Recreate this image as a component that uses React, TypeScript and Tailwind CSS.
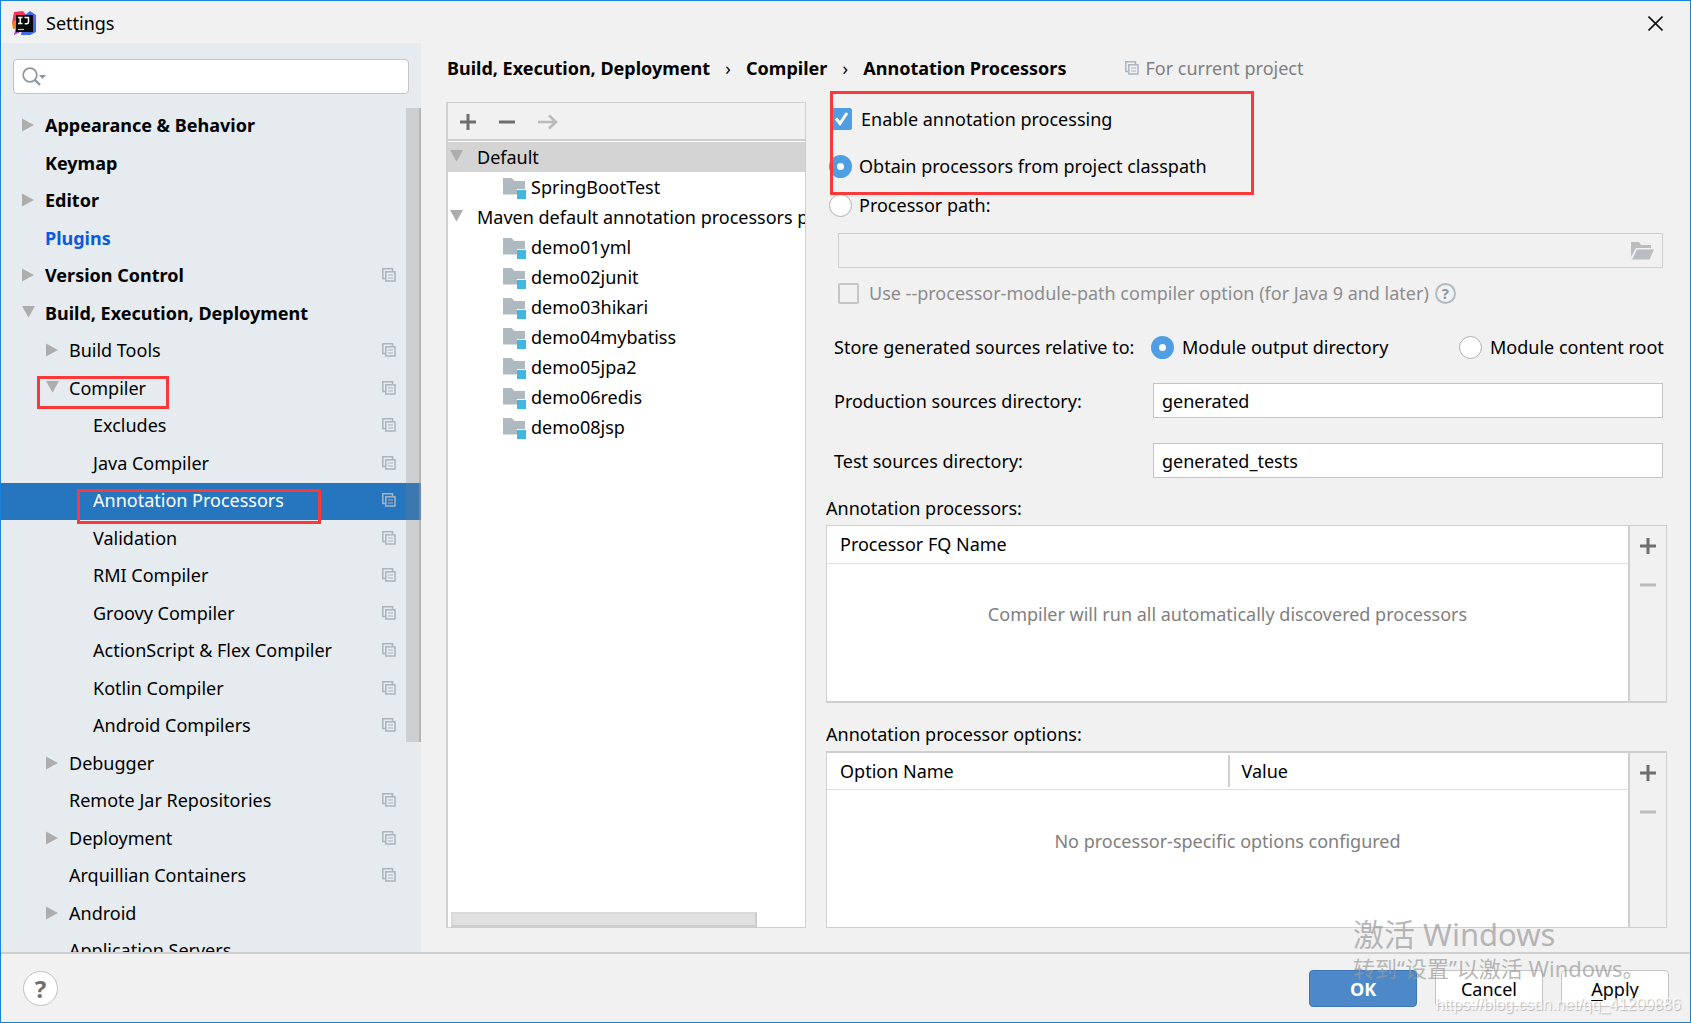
import { useState } from "react"
import type { ReactNode } from "react"

type TreeItem = { label: string; level: number; arrow?: "right" | "down"; shared?: boolean }

const tree: TreeItem[] = [
    { label: "Appearance & Behavior", level: 0, arrow: "right" },
    { label: "Keymap", level: 0 },
    { label: "Editor", level: 0, arrow: "right" },
    { label: "Plugins", level: 0 },
    { label: "Version Control", level: 0, arrow: "right", shared: true },
    { label: "Build, Execution, Deployment", level: 0, arrow: "down" },
    { label: "Build Tools", level: 1, arrow: "right", shared: true },
    { label: "Compiler", level: 1, arrow: "down", shared: true },
    { label: "Excludes", level: 2, shared: true },
    { label: "Java Compiler", level: 2, shared: true },
    { label: "Annotation Processors", level: 2, shared: true },
    { label: "Validation", level: 2, shared: true },
    { label: "RMI Compiler", level: 2, shared: true },
    { label: "Groovy Compiler", level: 2, shared: true },
    { label: "ActionScript & Flex Compiler", level: 2, shared: true },
    { label: "Kotlin Compiler", level: 2, shared: true },
    { label: "Android Compilers", level: 2, shared: true },
    { label: "Debugger", level: 1, arrow: "right" },
    { label: "Remote Jar Repositories", level: 1, shared: true },
    { label: "Deployment", level: 1, arrow: "right", shared: true },
    { label: "Arquillian Containers", level: 1, shared: true },
    { label: "Android", level: 1, arrow: "right" },
    { label: "Application Servers", level: 1 },
]

const indent = ["pl-[21px]", "pl-[45px]", "pl-[69px]"]

const modules = ["demo01yml", "demo02junit", "demo03hikari", "demo04mybatiss", "demo05jpa2", "demo06redis", "demo08jsp"]

function Arrow({ dir }: { dir?: "right" | "down" }) {
    return (
        <svg className="mr-[9px] shrink-0" width="14" height="14" viewBox="0 0 14 14" fill="#adadad">
            {dir === "right" && <path d="M0 0.5 12 7 0 13.5z" />}
            {dir === "down" && <path d="M0 0h13L6.5 11.5z" />}
        </svg>
    )
}

function SharedIcon() {
    return (
        <svg className="shrink-0" width="14" height="14" viewBox="0 0 14 14" fill="none" stroke="#a9b4bd">
            <path d="M3 10.5H0.8V0.8H10.5V3" strokeWidth="1.5" />
            <rect x="3.8" y="3.8" width="9.2" height="9.2" strokeWidth="1.5" />
            <path d="M6 7h5M6 10h5" strokeWidth="1.2" />
        </svg>
    )
}

function ModuleIcon() {
    return (
        <svg className="mt-[2px] mr-[5px] shrink-0" width="23" height="22" viewBox="0 0 23 22">
            <path d="M0 1h8.5l3 3H22v8h-8v5.500H0z" fill="#aeb9c0" />
            <rect x="14" y="13" width="9" height="9" fill="#40b6e0" />
        </svg>
    )
}

function PlusIcon() {
    return (
        <svg width="16" height="16" viewBox="0 0 16 16" stroke="#6e6e6e" strokeWidth="3">
            <path d="M8 0v16M0 8h16" />
        </svg>
    )
}

function MinusIcon({ color }: { color: string }) {
    return (
        <svg width="16" height="16" viewBox="0 0 16 16" stroke={color} strokeWidth="3">
            <path d="M0 8h16" />
        </svg>
    )
}

function Logo() {
    return (
        <svg width="25" height="25" viewBox="0 0 25 25">
            <path d="M2 1 11 0l4 5-4 9-9 1-2-3z" fill="#fe315d" />
            <path d="M0 11l5-2v8l-4 1z" fill="#f97a12" />
            <path d="M2 24l2-8 8 3z" fill="#9a3fd5" />
            <path d="M13 4l5-4 6 4v17l-6 3H9z" fill="#3f6be8" />
            <path d="M17 4l7 1v8z" fill="#6b57ff" />
            <rect x="4" y="4" width="17" height="17" fill="#0a0a0a" />
            <path d="M6 6.500h4.500M8.200 6.500v6M6 12.500h4.500M12.500 6.500h4v4.500q0 1.700-1.800 1.700h-2" stroke="#fff" strokeWidth="1.500" fill="none" />
            <path d="M6 18.500h6" stroke="#bbb" strokeWidth="1.300" />
        </svg>
    )
}

const radioClass =
    "size-[23px] shrink-0 appearance-none rounded-full border border-[#b0b0b0] bg-white checked:border-8 checked:border-[#4f9ee3]"

function Sidebar() {
    const [selected, setSelected] = useState("Annotation Processors")

    return (
        <aside className="flex w-[420px] shrink-0 flex-col overflow-hidden bg-[#e6ebef]">
            <div className="mt-4 mr-3 mb-[14px] ml-3 flex h-[35px] shrink-0 items-center rounded border border-[#c4c4c4] bg-white pl-2">
                <svg width="26" height="20" viewBox="0 0 26 20" fill="none" stroke="#8b979f">
                    <circle cx="8" cy="8" r="6.800" strokeWidth="1.700" />
                    <path d="M12.500 12.500 18 18" strokeWidth="2.400" />
                    <path d="M17 8h7l-3.500 4z" fill="#8b979f" stroke="none" />
                </svg>
                <input type="text" aria-label="Search settings" className="h-full min-w-0 flex-1 outline-none" />
            </div>
            <div className="relative min-h-0 flex-1 overflow-hidden">
                <ul>
                    {tree.map((item) => (
                        <li key={item.label} className="relative odd:h-[37px] even:h-[38px]">
                            <button
                                type="button"
                                onClick={() => setSelected(item.label)}
                                className={`flex h-full w-full items-center pr-[25px] pb-[3px] text-left ${indent[item.level]} ${
                                    item.level === 0 ? "font-bold" : ""
                                } ${item.label === "Plugins" ? "text-[#0a5ae0]" : ""} ${
                                    selected === item.label ? "bg-[#2675bf] text-white" : ""
                                }`}
                            >
                                <Arrow dir={item.arrow} />
                                <span className="flex-1 whitespace-nowrap">{item.label}</span>
                                {item.shared && <SharedIcon />}
                            </button>
                            {item.label === "Compiler" && (
                                <span className="pointer-events-none absolute top-[6px] left-9 h-[33px] w-[132px] border-3 border-[#fb3939]" />
                            )}
                            {item.label === "Annotation Processors" && (
                                <span className="pointer-events-none absolute top-[6px] left-[76px] z-10 h-[35px] w-[244px] border-3 border-[#fb3939]" />
                            )}
                        </li>
                    ))}
                </ul>
                <div className="absolute top-0 right-0 h-[634px] w-[15px] border-r-2 border-[#999ca0]/50 bg-[#808080]/25" />
            </div>
        </aside>
    )
}

function ProfileRow({ children, active }: { children: ReactNode; active?: boolean }) {
    return (
        <li className={`flex h-[30px] items-center pl-[2px] whitespace-nowrap ${active ? "bg-[#d4d4d4]" : ""}`}>
            <Arrow dir="down" />
            <span className="pl-1">{children}</span>
        </li>
    )
}

function ModuleRow({ name }: { name: string }) {
    return (
        <li className="flex h-[30px] items-center pl-[55px]">
            <ModuleIcon />
            {name}
        </li>
    )
}

function Profiles() {
    return (
        <section className="flex w-[360px] shrink-0 flex-col border border-l-2 border-[#cfcfcf] bg-white">
            <div className="mb-px flex h-[38px] shrink-0 items-center gap-[23px] border-b-2 border-[#cfcfcf] bg-[#f1f1f1] pt-[2px] pl-3">
                <button type="button" aria-label="Add profile"><PlusIcon /></button>
                <button type="button" aria-label="Remove profile"><MinusIcon color="#6e6e6e" /></button>
                <button type="button" aria-label="Move to">
                    <svg width="20" height="16" viewBox="0 0 20 16" fill="none" stroke="#bababa" strokeWidth="2.600">
                        <path d="M0 8h18M11 1.500 18 8l-7 6.500" />
                    </svg>
                </button>
            </div>
            <ul className="min-h-0 flex-1 overflow-hidden">
                <ProfileRow active>Default</ProfileRow>
                <ModuleRow name="SpringBootTest" />
                <ProfileRow>Maven default annotation processors profile</ProfileRow>
                {modules.map((name) => (
                    <ModuleRow key={name} name={name} />
                ))}
            </ul>
            <div className="ml-[3px] h-[15px] w-[306px] shrink-0 border-2 border-[#dadada] border-r-[#cccccc] border-b-[#cccccc] bg-[#e1e1e1]" />
        </section>
    )
}

function TableBox({ columns, empty, edge }: { columns: string[]; empty: string; edge: string }) {
    return (
        <div className={`flex min-h-0 flex-1 border border-[#cfcfcf] bg-white ${edge}`}>
            <div className="min-w-0 flex-1">
                <table className="h-full w-full table-fixed border-collapse">
                    <thead>
                        <tr className="h-[37px] border-b border-[#e2e2e2]">
                            {columns.map((c, i) => (
                                <th key={c} className="p-0 text-left font-normal">
                                    <div className={`flex h-8 items-center ${i > 0 ? "border-l-2 border-[#cfcfcf] pl-3" : "pl-[13px]"}`}>{c}</div>
                                </th>
                            ))}
                        </tr>
                    </thead>
                    <tbody>
                        <tr>
                            <td colSpan={columns.length} className="pb-9 text-center text-[#808080]">{empty}</td>
                        </tr>
                    </tbody>
                </table>
            </div>
            <div className="flex w-[38px] shrink-0 flex-col items-center gap-[23px] border-l-2 border-[#cfcfcf] bg-[#f1f1f1] pt-3">
                <button type="button" aria-label="Add"><PlusIcon /></button>
                <button type="button" aria-label="Remove" disabled><MinusIcon color="#bcbcbc" /></button>
            </div>
        </div>
    )
}

function ProcessorForm() {
    return (
        <section className="flex min-w-0 flex-1 flex-col">
            <div className="relative flex flex-col">
                <label className="flex h-[34px] items-center gap-[9px] pl-1">
                    <span className="relative flex size-[22px]">
                        <input type="checkbox" defaultChecked className="peer size-full appearance-none rounded-xs border border-[#b0b0b0] bg-white checked:border-[#4f9ee3] checked:bg-[#4f9ee3]" />
                        <svg className="pointer-events-none absolute inset-0 hidden peer-checked:block" width="22" height="22" viewBox="0 0 22 22" fill="none" stroke="#fff" strokeWidth="3">
                            <path d="M6 10.500 10 15.500 17 5" />
                        </svg>
                    </span>
                    Enable annotation processing
                </label>
                <label className="mt-[10px] flex h-10 items-center gap-[7px] pl-[3px]">
                    <input type="radio" name="source" defaultChecked className={radioClass} />
                    Obtain processors from project classpath
                </label>
                <label className="flex h-[38px] items-center gap-[7px] pl-[3px]">
                    <input type="radio" name="source" className={radioClass} />
                    Processor path:
                </label>
                <span className="pointer-events-none absolute -top-[11px] left-1 h-[104px] w-[424px] border-3 border-[#fb3939]" />
            </div>

            <div className="mt-[9px] mr-1 ml-3 flex h-[35px] shrink-0 items-center border border-[#cfcfcf] pr-2">
                <input type="text" disabled aria-label="Processor path" className="h-full min-w-0 flex-1" />
                <button type="button" disabled aria-label="Browse">
                    <svg width="23" height="18" viewBox="0 0 23 18" fill="#b7bdc1">
                        <path d="M0 0h8l2 3h10v3H5L0 15z" />
                        <path d="M6 7.500h17L18.500 17.500H1z" />
                    </svg>
                </button>
            </div>

            <div className="flex h-[50px] shrink-0 items-center gap-[6px] pl-3 text-[#8c8c8c]">
                <label className="flex items-center gap-[10px]">
                    <input type="checkbox" disabled className="size-[21px] appearance-none rounded-xs border-2 border-[#c6c6c6]" />
                    Use --processor-module-path compiler option (for Java 9 and later)
                </label>
                <span className="flex size-[21px] items-center justify-center rounded-full border-2 border-[#afbac1] text-[15px] leading-none font-bold text-[#8b979f]">?</span>
            </div>

            <div className="flex h-[58px] shrink-0 items-center justify-between whitespace-nowrap">
                <div className="flex items-center">
                    <span className="w-[325px] pl-2">Store generated sources relative to:</span>
                    <label className="flex items-center gap-2">
                        <input type="radio" name="store" defaultChecked className={radioClass} />
                        Module output directory
                    </label>
                </div>
                <label className="flex w-[208px] items-center gap-2">
                    <input type="radio" name="store" className={radioClass} />
                    Module content root
                </label>
            </div>

            <div className="mt-[7px] mr-1 flex flex-col gap-[25px]">
                <label className="flex h-[35px] items-center">
                    <span className="w-[327px] shrink-0 pl-2">Production sources directory:</span>
                    <input type="text" defaultValue="generated" className="h-full min-w-0 flex-1 border border-[#c4c4c4] bg-white px-2 outline-none" />
                </label>
                <label className="flex h-[35px] items-center">
                    <span className="w-[327px] shrink-0 pl-2">Test sources directory:</span>
                    <input type="text" defaultValue="generated_tests" className="h-full min-w-0 flex-1 border border-[#c4c4c4] bg-white px-2 outline-none" />
                </label>
            </div>

            <h3 className="mt-[13px] flex h-[34px] shrink-0 items-center">Annotation processors:</h3>
            <TableBox columns={["Processor FQ Name"]} empty="Compiler will run all automatically discovered processors" edge="border-b-2" />
            <h3 className="mt-[14px] flex h-[34px] shrink-0 items-center">Annotation processor options:</h3>
            <TableBox columns={["Option Name", "Value"]} empty="No processor-specific options configured" edge="border-t-2" />
        </section>
    )
}

export default function App() {
    return (
        <div className="relative flex h-screen flex-col overflow-hidden border border-[#1883d7] bg-[#f1f1f1] font-['Noto_Sans','Noto_Sans_CJK_SC',sans-serif] text-[18px] leading-6 text-black">
            <header className="flex h-[42px] shrink-0 items-center justify-between pt-[2px] pr-[27px] pl-[11px]">
                <div className="flex items-center gap-[9px]">
                    <Logo />
                    <h1>Settings</h1>
                </div>
                <button type="button" aria-label="Close">
                    <svg width="15" height="15" viewBox="0 0 15 15" stroke="#111" strokeWidth="1.600">
                        <path d="M0.500 0.500l14 14M14.500 0.500l-14 14" />
                    </svg>
                </button>
            </header>

            <div className="flex min-h-0 flex-1">
                <Sidebar />
                <main className="flex min-w-0 flex-1 flex-col pr-[23px] pb-6 pl-[25px]">
                    <nav className="mb-[9px] flex h-[50px] shrink-0 items-center pl-px font-bold whitespace-nowrap" aria-label="Breadcrumb">
                        <span>Build, Execution, Deployment</span>
                        <span className="w-9 text-center font-normal">›</span>
                        <span>Compiler</span>
                        <span className="w-9 text-center font-normal">›</span>
                        <span>Annotation Processors</span>
                        <span className="ml-[59px] flex items-center gap-[6px] font-normal text-[#808080]">
                            <SharedIcon />
                            For current project
                        </span>
                    </nav>
                    <div className="flex min-h-0 flex-1 gap-5">
                        <Profiles />
                        <ProcessorForm />
                    </div>
                </main>
            </div>

            <footer className="flex h-[70px] shrink-0 items-center justify-between border-t-2 border-[#cfcfcf] pt-px pr-[21px] pl-[22px]">
                <button type="button" className="size-[35px] rounded-full border border-[#c0c0c0] bg-white text-[24px] leading-none font-bold text-[#6e6e6e]">?</button>
                <div className="flex gap-[18px]">
                    <button type="button" className="h-[37px] w-[108px] rounded border border-[#3d76b8] bg-[#4d89c9] font-bold text-white">OK</button>
                    <button type="button" className="h-[37px] w-[108px] rounded border border-[#c4c4c4] bg-white">Cancel</button>
                    <button type="button" className="h-[37px] w-[108px] rounded border border-[#c4c4c4] bg-white"><span className="underline underline-offset-4">A</span>pply</button>
                </div>
            </footer>

            <div className="pointer-events-none absolute right-[50px] bottom-[38px] w-[287px] whitespace-nowrap text-[#999999]/70">
                <p className="text-[31px] leading-9">激活 Windows</p>
                <p className="text-[22px] leading-8">转到“设置”以激活 Windows。</p>
            </div>
            <p className="pointer-events-none absolute right-[9px] bottom-[5px] font-['Liberation_Sans',sans-serif] text-[16px] text-white/80 [text-shadow:1px_1px_1px_#b8b8b8]">https://blog.csdn.net/qq_41209886</p>
        </div>
    )
}
